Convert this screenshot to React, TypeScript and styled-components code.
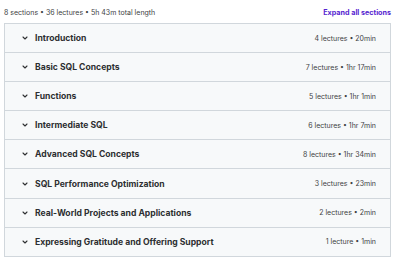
import styled, { createGlobalStyle } from 'styled-components';

const sections = [
    { title: 'Introduction', meta: '4 lectures • 20min' },
    { title: 'Basic SQL Concepts', meta: '7 lectures • 1hr 17min' },
    { title: 'Functions', meta: '5 lectures • 1hr 1min' },
    { title: 'Intermediate SQL', meta: '6 lectures • 1hr 7min' },
    { title: 'Advanced SQL Concepts', meta: '8 lectures • 1hr 34min' },
    { title: 'SQL Performance Optimization', meta: '3 lectures • 23min' },
    { title: 'Real-World Projects and Applications', meta: '2 lectures • 2min' },
    { title: 'Expressing Gratitude and Offering Support', meta: '1 lecture • 1min' },
];

function Chevron() {
    return (
        <svg width="8" height="8" viewBox="0 0 24 24" fill="none" stroke="#2d2f31" strokeWidth="3.2" strokeLinecap="round" strokeLinejoin="round">
            <polyline points="6 9 12 15 18 9" />
        </svg>
    );
}

export default function App() {
    return (
        <>
            <GlobalStyle />
            <Page>
                <Header>
                    <Summary>8 sections • 36 lectures • 5h 43m total length</Summary>
                    <Expand>Expand all sections</Expand>
                </Header>
                <List>
                    {sections.map((s) => (
                        <Row key={s.title}>
                            <ChevronBox><Chevron /></ChevronBox>
                            <Title>{s.title}</Title>
                            <Meta>{s.meta}</Meta>
                        </Row>
                    ))}
                </List>
            </Page>
        </>
    );
}

const GlobalStyle = createGlobalStyle`
    body {
        margin: 0;
        background: #ffffff;
        font-family: Inter, "Noto Sans", sans-serif;
        color: #2d2f31;
    }
`;

const Page = styled.div`
    width: 400px;
    padding: 6px 9px 0 4px;
    box-sizing: border-box;
`;

const Header = styled.div`
    display: flex;
    justify-content: space-between;
    align-items: center;
    height: 13px;
    margin-bottom: 4px;
`;

const Summary = styled.span`
    font-size: 7px;
    color: #3e4143;
`;

const Expand = styled.span`
    font-size: 7.2px;
    font-weight: 700;
    color: #5624d0;
`;

const List = styled.div`
    border: 1px solid #d1d7dc;
    border-bottom: none;
`;

const Row = styled.div`
    display: flex;
    align-items: center;
    height: 28.1px;
    padding: 0 14px 0 16px;
    background: #f7f9fa;
    border-bottom: 1px solid #d1d7dc;
`;

const ChevronBox = styled.span`
    display: flex;
    width: 14px;
`;

const Title = styled.span`
    flex: 1;
    font-size: 8.6px;
    font-weight: 700;
    color: #2d2f31;
`;

const Meta = styled.span`
    font-size: 7px;
    color: #3e4143;
`;
